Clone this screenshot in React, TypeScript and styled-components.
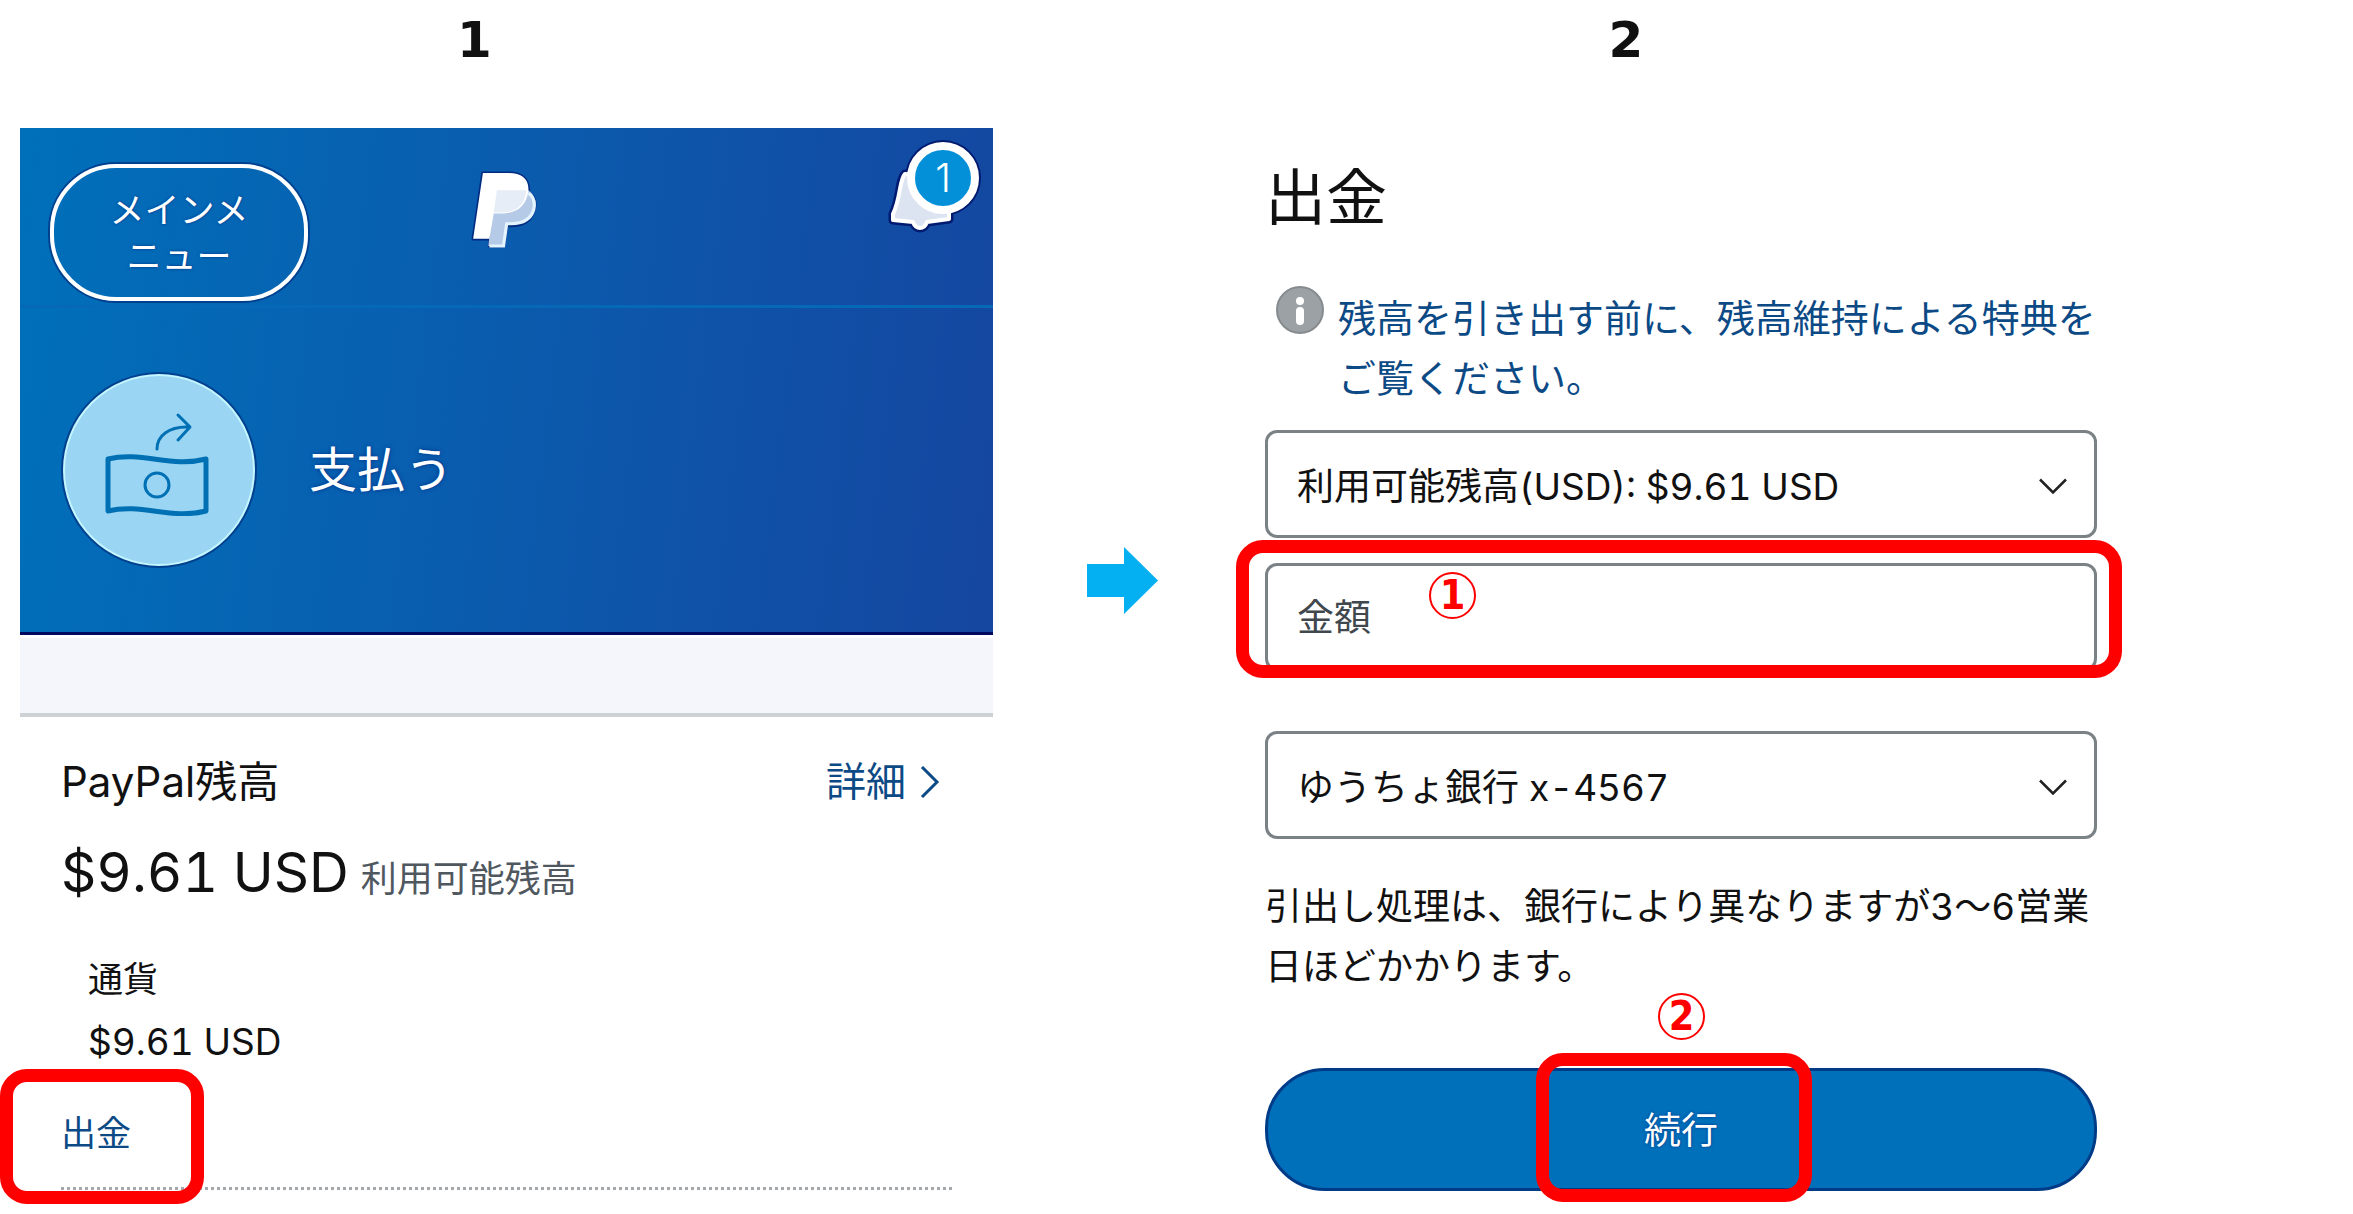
import React from "react";
import styled, { createGlobalStyle } from "styled-components";

const sans = `Inter, "Noto Sans CJK JP", sans-serif`;

const GlobalStyle = createGlobalStyle`
  *, *::before, *::after { box-sizing: border-box; }
  body {
    margin: 0;
    background: #fff;
    color: #111;
    font-family: ${sans};
    font-size: 37px;
    font-variant-numeric: tabular-nums;
    line-height: 60px;
  }
  h1, h2, h3, p, dl, dd, dt { margin: 0; font-size: inherit; font-weight: 400; }
  a { color: #0c4a86; text-decoration: none; }
  button, input, select { font: inherit; color: inherit; margin: 0; }
`;

const Page = styled.main`
  display: grid;
  grid-template-columns: 973fr 272px 832fr;
  min-height: 100vh;
  padding: 0 256px 0 20px;
`;

const Step = styled.section`
  display: flex;
  flex-direction: column;
  min-width: 0;
`;

const StepNumber = styled.h2<{ $shift: number }>`
  height: 128px;
  padding: 10px ${(p) => p.$shift}px 0 0;
  text-align: center;
  font: bold 50px/60px "DejaVu Sans", sans-serif;
`;

const Hero = styled.header`
  background: linear-gradient(97deg, #0070ba 0%, #1546a0 100%);
  border-bottom: 3px solid #000a60;
  color: #fff;
`;

const TopBar = styled.div`
  display: grid;
  grid-template-columns: 1fr auto 1fr;
  align-items: start;
  height: 180px;
  padding: 36px 36px 0 30px;
  border-bottom: 3px solid #0669b8;
`;

const MenuButton = styled.button`
  justify-self: start;
  width: 258px;
  height: 137px;
  padding: 0 48px;
  border: 4px solid #fff;
  border-radius: 66px;
  background: transparent;
  box-shadow: 0 0 0 2px #00408f;
  font-size: 35px;
  line-height: 46px;
  text-shadow: 0 0 3px #003087;
`;

const Logo = styled.svg`
  width: 66px;
  height: 79px;
  margin-top: 7px;
`;

const BellButton = styled.button`
  position: relative;
  justify-self: end;
  width: 93px;
  height: 96px;
  margin: -24px -24px 0 0;
  padding: 0;
  border: 0;
  background: none;
  svg { display: block; }
`;

const Badge = styled.span`
  position: absolute;
  top: 2px;
  right: 2px;
  display: grid;
  place-items: center;
  width: 72px;
  height: 72px;
  border: 8px solid #fff;
  border-radius: 50%;
  background: #0390d8;
  font-size: 40px;
  font-weight: 300;
  font-variant-numeric: normal;
  line-height: 50px;
`;

const PayRow = styled.a`
  display: flex;
  align-items: center;
  gap: 54px;
  height: 324px;
  padding: 0 42px 0 43px;
  color: #fff;
  font-size: 48px;
  text-shadow: 0 0 4px #003087;
`;

const PayIcon = styled.span`
  display: grid;
  place-items: center;
  width: 192px;
  height: 192px;
  padding: 0 4px 12px 0;
  border: 2px solid #c4f6ff;
  border-radius: 50%;
  background: #9ad6f3;
  box-shadow: 0 0 0 2px #00408f;
`;

const Band = styled.div`
  height: 82px;
  border-top: 3px solid #fff;
  border-bottom: 4px solid #ced1d3;
  background: #f4f6fb;
`;

const Balance = styled.div`
  display: flex;
  flex-direction: column;
  margin: 0 41px;
  padding-top: 35px;
  border-bottom: 3px dotted #a4a8aa;
`;

const BalanceHead = styled.div`
  display: flex;
  justify-content: space-between;
  padding-right: 12px;
  font-size: 40px;
  h3 { font-size: 42px; }
  a { display: flex; align-items: center; gap: 14px; }
`;

const Amount = styled.p`
  display: flex;
  align-items: baseline;
  gap: 12px;
  padding-top: 30px;
  font-size: 55px;
  line-height: 60px;
  small { font-size: 36px; color: #50585f; }
`;

const Currency = styled.dl`
  padding: 40px 0 0 27px;
  font-size: 35px;
  dd { font-size: 37px; line-height: 66px; }
`;

const WithdrawRow = styled.div`
  padding: 28px 0 24px;
  font-size: 35px;
`;

const Marked = styled.span`
  position: relative;
  display: inline-block;
`;

const Frame = styled.span<{ $inset: string }>`
  position: absolute;
  inset: ${(p) => p.$inset};
  border: 13px solid #f00;
  border-radius: 27px;
  pointer-events: none;
`;

const Callout = styled.span<{ $top: number; $left: string }>`
  position: absolute;
  top: ${(p) => p.$top}px;
  left: ${(p) => p.$left};
  display: grid;
  place-items: center;
  width: 47px;
  height: 47px;
  border: 2px solid #f00;
  border-radius: 50%;
  color: #f00;
  font: bold 41px/43px "DejaVu Sans Condensed", "DejaVu Sans", sans-serif;
  pointer-events: none;
`;

const Between = styled.div`
  display: flex;
  justify-content: center;
  padding: 547px 14px 0 0;
  svg { display: block; width: 71px; height: 67px; }
`;

const Title = styled.h1`
  padding: 30px 0 0 0;
  font-size: 61px;
  line-height: 80px;
`;

const Notice = styled.p`
  display: flex;
  gap: 14px;
  padding: 50px 0 0 11px;
  font-size: 38px;
  svg { flex: none; margin-top: -3px; }
  a { flex: 1; white-space: nowrap; }
`;

const Form = styled.form`
  display: flex;
  flex-direction: column;
  padding-top: 22px;
`;

const Field = styled.div<{ $gap: number }>`
  position: relative;
  margin-top: ${(p) => p.$gap}px;
  > svg {
    position: absolute;
    right: 30px;
    top: 48px;
    pointer-events: none;
  }
`;

const control = `
  display: block;
  width: 100%;
  height: 108px;
  padding: 0 30px 0 29px;
  border: 3px solid #7b8286;
  border-radius: 12px;
  background: #fff;
  appearance: none;
  outline: none;
`;

const Select = styled.select`
  ${control}
  padding-top: 6px;
`;

const Input = styled.input`
  ${control}
  &::placeholder { color: #40474d; opacity: 1; }
`;

const Hint = styled.p`
  padding-top: 38px;
`;

const SubmitRow = styled.div`
  position: relative;
  margin-top: 71px;
`;

const Submit = styled.button`
  display: block;
  width: 100%;
  height: 123px;
  padding: 2px 0 0;
  border: 3px solid #003b87;
  border-radius: 60px;
  background: #0070ba;
  color: #fff;
  text-shadow: 0 0 3px #003087;
`;

const Chevron = () => (
  <svg width="28" height="16" viewBox="0 0 28 16" fill="none" stroke="#222" strokeWidth="2.5">
    <path d="M1 1.5 14 14.5 27 1.5" />
  </svg>
);

export default function App() {
  return (
    <>
      <GlobalStyle />
      <Page>
        <Step>
          <StepNumber $shift={64}>1</StepNumber>
          <Hero>
            <TopBar>
              <MenuButton type="button">メインメニュー</MenuButton>
              <Logo viewBox="0 0 61 78" preserveAspectRatio="none" role="img" aria-label="PayPal">
                <g stroke="#002a80" strokeWidth="3" strokeLinejoin="round">
                  <path d="M11 2h24c12 0 19 6 18 19 6 4 7 11 5 18-3 11-11 15-21 15h-4l-3 20H17l1-7H2z" />
                </g>
                <path d="M22 19h31c6 4 7 11 5 18-3 11-11 15-21 15h-4l-3 22H16z" fill="#b4cae6" />
                <path d="M53 22c6 4 6 11 5 16-3 11-11 14-21 14h-4l-3 22H17" fill="none" stroke="#e4f4ff" strokeWidth="3" />
                <path d="M11 2h24c12 0 19 6 18 18-2 15-11 22-25 22h-7l-4 25H2z" fill="#fff" />
                <path d="M24 19h27c-1 15-10 22-23 22h-7z" fill="#e6edf6" />
              </Logo>
              <BellButton type="button" aria-label="通知 1件">
                <svg width="93" height="96" viewBox="0 0 93 96" strokeLinejoin="round">
                  <circle cx="55" cy="38" r="38" fill="#001a70" />
                  <path
                    d="M17 34c-6 6-4 24-12 40v6l20 2c3 8 11 8 14 0l22-3v-9L50 36z"
                    fill="#dde4f1"
                    stroke="#001a70"
                    strokeWidth="9"
                  />
                  <path
                    d="M17 34c-6 6-4 24-12 40v6l20 2c3 8 11 8 14 0l22-3v-9L50 36z"
                    fill="#dde4f1"
                    stroke="#fff"
                    strokeWidth="4"
                  />
                </svg>
                <Badge>1</Badge>
              </BellButton>
            </TopBar>
            <PayRow href="#pay">
              <PayIcon>
                <svg width="104" height="104" viewBox="0 0 104 104" fill="none" stroke="#0070b4">
                  <path d="M3 47C37 39 66 56 101 47V99C66 108 37 91 3 99Z" strokeWidth="5" strokeLinejoin="round" />
                  <circle cx="52" cy="73" r="12" strokeWidth="3" />
                  <path d="M52 37C52 24 64 14 84 15M73 3 85 15 73 28" strokeWidth="3" strokeLinecap="round" strokeLinejoin="round" />
                </svg>
              </PayIcon>
              支払う
            </PayRow>
          </Hero>
          <Band />
          <Balance>
            <BalanceHead>
              <h3>PayPal残高</h3>
              <a href="#detail">
                詳細
                <svg width="20" height="32" viewBox="0 0 20 32" fill="none" stroke="#0c4a86" strokeWidth="3">
                  <path d="M2 1 17 16 2 31" />
                </svg>
              </a>
            </BalanceHead>
            <Amount>
              $9.61 USD <small>利用可能残高</small>
            </Amount>
            <Currency>
              <dt>通貨</dt>
              <dd>$9.61 USD</dd>
            </Currency>
            <WithdrawRow>
              <Marked>
                <a href="#withdraw">出金</a>
                <Frame $inset="-34px -73px -41px -61px" />
              </Marked>
            </WithdrawRow>
          </Balance>
        </Step>

        <Between>
          <svg viewBox="0 0 71 67" aria-hidden="true">
            <path d="M0 17H37V0L71 33.500 37 67V50H0Z" fill="#05b0f2" />
          </svg>
        </Between>

        <Step>
          <StepNumber $shift={110}>2</StepNumber>
          <Title>出金</Title>
          <Notice>
            <svg width="48" height="50" viewBox="0 0 48 50" aria-hidden="true">
              <circle cx="24" cy="25" r="23" fill="#9ba1a5" stroke="#858b8f" strokeWidth="2" />
              <circle cx="24" cy="16" r="4" fill="#fff" />
              <rect x="20" y="22" width="8" height="18" rx="4" fill="#fff" />
            </svg>
            <a href="#benefits">
              残高を引き出す前に、残高維持による特典を
              <br />
              ご覧ください。
            </a>
          </Notice>
          <Form onSubmit={(e) => e.preventDefault()}>
            <Field $gap={0}>
              <Select aria-label="残高">
                <option>利用可能残高(USD): $9.61 USD</option>
              </Select>
              <Chevron />
            </Field>
            <Field $gap={25}>
              <Input type="text" inputMode="decimal" placeholder="金額" aria-label="金額" />
              <Frame $inset="-23px -25px -7px -29px" />
              <Callout $top={9} $left="164px">1</Callout>
            </Field>
            <Field $gap={60}>
              <Select aria-label="銀行口座">
                <option>ゆうちょ銀行 x-4567</option>
              </Select>
              <Chevron />
            </Field>
            <Hint>引出し処理は、銀行により異なりますが3〜6営業日ほどかかります。</Hint>
            <SubmitRow>
              <Submit type="submit">続行</Submit>
              <Frame $inset="-15px 285px -11px 271px" />
              <Callout $top={-75} $left="calc(50% - 23px)">2</Callout>
            </SubmitRow>
          </Form>
        </Step>
      </Page>
    </>
  );
}
